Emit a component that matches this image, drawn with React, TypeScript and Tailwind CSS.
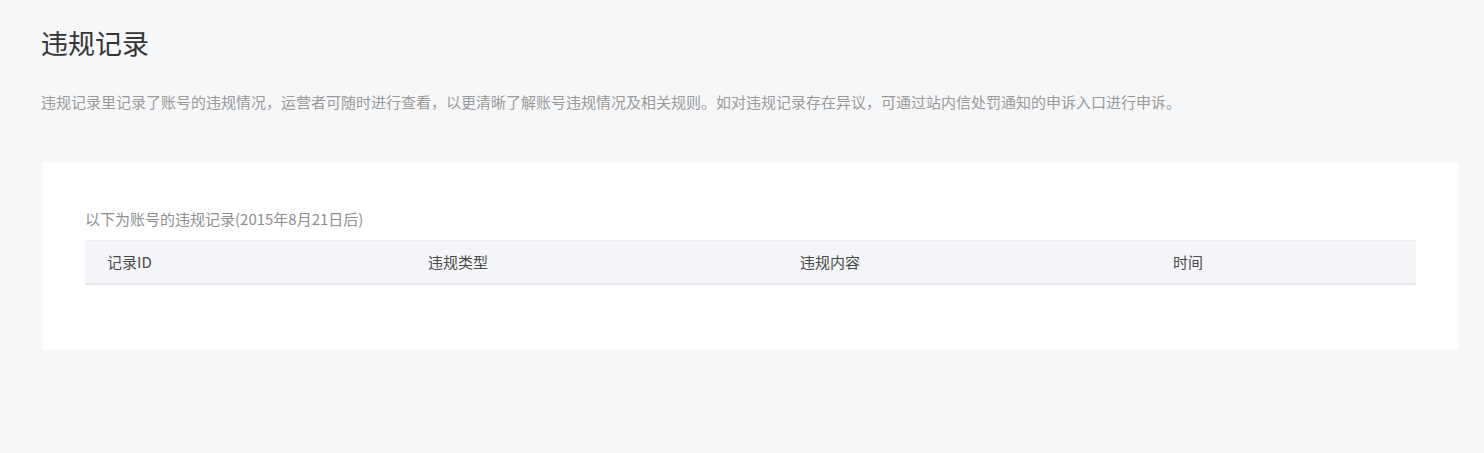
import React from 'react';

const columns = ['记录ID', '违规类型', '违规内容', '时间'];

const App = () => {
  return (
    <div className="min-h-screen bg-[#f6f7f9] pl-[41px] pr-[25px] pt-[22px] font-['Noto_Sans_CJK_SC',sans-serif]">
      <h1 className="text-[27px] leading-[42px] text-[#353535]">违规记录</h1>
      <p className="mt-[26px] text-[15px] leading-[24px] text-[#9a9a9a]">
        违规记录里记录了账号的违规情况，运营者可随时进行查看，以更清晰了解账号违规情况及相关规则。如对违规记录存在异议，可通过站内信处罚通知的申诉入口进行申诉。
      </p>

      {/* records card */}
      <div className="mt-[48px] ml-px rounded-sm bg-white px-[43px] pt-[45px] pb-[65px]">
        <div className="text-[15px] leading-[24px] text-[#8f8f8f]">以下为账号的违规记录(2015年8月21日后)</div>
        <div className="mt-[9px] grid grid-cols-[321px_372px_373px_1fr] border-t border-[#eceef2] border-b-2 border-b-[#e4e6eb] bg-[#f4f5f8] pl-[22px]">
          {columns.map((c) => (
            <div key={c} className="h-[42px] flex items-center text-[15px] text-[#4a4a4a]">
              {c}
            </div>
          ))}
        </div>
      </div>
    </div>
  );
};

export default App;
